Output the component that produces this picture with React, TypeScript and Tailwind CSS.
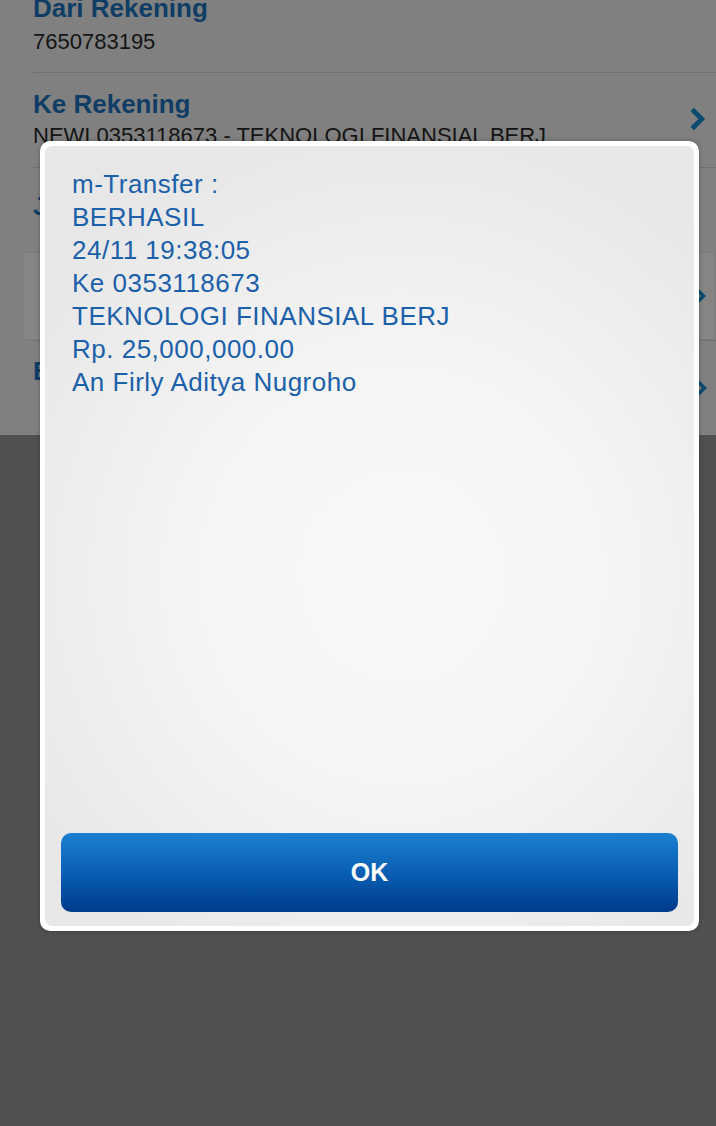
const lines = [
  "m-Transfer :",
  "BERHASIL",
  "24/11 19:38:05",
  "Ke 0353118673",
  "TEKNOLOGI FINANSIAL BERJ",
  "Rp. 25,000,000.00",
  "An Firly Aditya Nugroho",
];

const Chevron = ({ className }: { className?: string }) => (
  <svg viewBox="0 0 16 24" className={className} fill="none">
    <path d="M3 3 L12 12 L3 21" stroke="#0d4a70" strokeWidth="4.5" strokeLinejoin="miter" />
  </svg>
);

const App = () => {
  return (
    <div className="relative w-[716px] h-[1126px] overflow-hidden bg-[#505050] font-['Liberation_Sans',Arial,sans-serif]">
      {/* dimmed page behind the dialog */}
      <div className="h-[435px] bg-[#808080] overflow-hidden">
        <div className="h-[72px] pl-[33px] -mt-[8px] pt-0">
          <div className="text-[26px] leading-[32px] font-bold text-[#0f3d66]">Dari Rekening</div>
          <div className="text-[22px] leading-[26px] text-[#141414] mt-[5px]">7650783195</div>
        </div>
        <div className="ml-[33px] mt-[8px] border-t border-[#707070]" />
        <div className="flex items-center pl-[33px] pr-[10px] h-[94px]">
          <div className="flex-1 -mt-[4px]">
            <div className="text-[26px] leading-[32px] font-bold text-[#0f3d66]">Ke Rekening</div>
            <div className="text-[22px] leading-[26px] text-[#141414] mt-[3px] whitespace-nowrap">
              NEWI 0353118673 - TEKNOLOGI FINANSIAL BERJ
            </div>
          </div>
          <Chevron className="w-[17px] h-[26px] -mt-[2px]" />
        </div>
        <div className="ml-[33px] border-t border-[#707070]" />
        <div className="pl-[33px] h-[84px] flex items-center">
          <div className="text-[26px] font-bold text-[#0f3d66] -mt-[8px]">Jumlah</div>
        </div>
        <div className="ml-[22px] h-[88px] bg-[#858585] border border-[#7a7a7a] flex items-center justify-end pr-[8px]">
          <Chevron className="w-[14px] h-[20px]" />
        </div>
        <div className="ml-[33px] border-t border-[#707070]" />
        <div className="pl-[33px] pr-[8px] h-[94px] flex items-start pt-[14px]">
          <div className="flex-1 text-[26px] leading-[32px] font-bold text-[#0f3d66]">Berita</div>
          <Chevron className="w-[14px] h-[20px] mt-[23px]" />
        </div>
      </div>

      {/* dialog */}
      <div className="absolute left-[40px] top-[141px] w-[659px] h-[790px] rounded-[10px] bg-white p-[5px] shadow-[0_0_4px_rgba(0,0,0,0.3)]">
        <div className="h-full flex flex-col rounded-[7px] bg-[radial-gradient(ellipse_70%_60%_at_55%_55%,#f9f9f9_0%,#f5f5f5_45%,#e7e7e7_100%)]">
          <div className="flex-1 pl-[27px] pt-[22px]">
            {lines.map((l, i) => (
              <div key={i} className="text-[26px] leading-[33px] tracking-[0.5px] text-[#1b60a9] whitespace-nowrap">
                {l}
              </div>
            ))}
          </div>
          <button className="mx-[16px] mb-[14px] h-[79px] rounded-[10px] bg-gradient-to-b from-[#1a80d2] via-[#0b5fb4] to-[#003b8c] text-white text-[25px] font-bold">
            OK
          </button>
        </div>
      </div>
    </div>
  );
};

export default App;
